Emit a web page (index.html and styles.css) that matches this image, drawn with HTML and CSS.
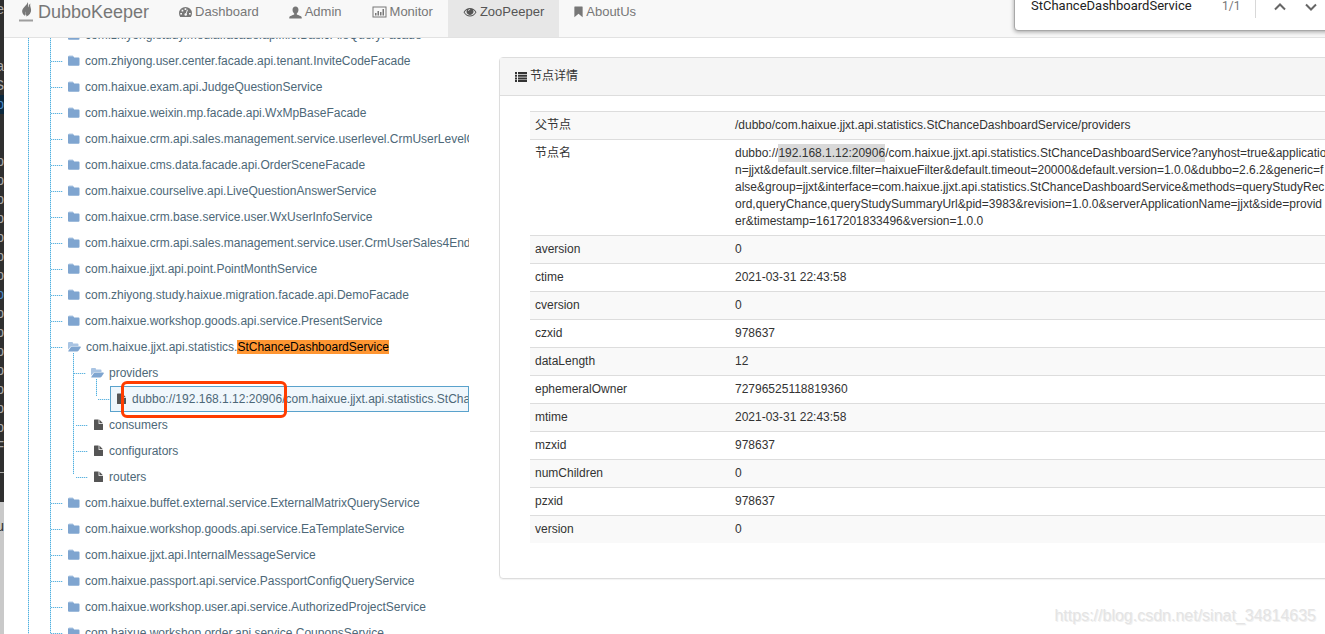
FILE: index.html
```html
<!DOCTYPE html>
<html lang="zh-CN">
<head>
<meta charset="utf-8">
<title>DubboKeeper</title>
<link rel="stylesheet" href="styles.css">
</head>
<body>
<svg class="defs" aria-hidden="true">
  <symbol id="folder" viewBox="0 0 12 12"><path fill="#b4cbe6" d="M0 2.200Q0 .6 1.200.6h3.600L6 2.400H0z"/><path d="M0 1.600h5.300l.9.800H10.600Q11.500 2.400 11.500 3.400v6.300q0 1-1 1H1q-1 0-1-1z"/></symbol>
  <symbol id="folder-open" viewBox="0 0 13 12"><path fill="#a9c4e3" d="M0 8.500V2q0-1 1-1h3q1 0 1 1v.5h4.500q1 0 1 1V5H4.200q-1 0-1.600.7z"/><path d="M4 5.600h8.300q.9 0 .4.800l-2.200 3.300q-.5.800-1.400.8H.8q-.9 0-.4-.8L2.600 6.400q.5-.8 1.400-.8z"/></symbol>
  <symbol id="file" viewBox="0 0 9 12"><path d="M.6.500h4v3.900q0 .6.600.6H9v5.400q0 .6-.6.600H.6q-.6 0-.6-.6V1.100Q0 .5.600.5zM5.400.6 8.900 4.200H5.400z"/></symbol>
</svg>
<div class="screen">
  <aside class="editor" aria-hidden="true">
    <div class="code"><i>e</i><i></i><i></i><i>a</i><i>S</i><i class="sel">p</i><i></i><i></i><i>p</i><i>p</i><i>p</i><i>p</i><i>p</i><i>p</i><i>p</i><i class="blue">p</i><i>p</i><i>p</i><i>p</i><i>p</i><i>p</i><i>p</i><i>p</i><i>F</i><i>_</i><i></i></div>
    <div class="status">u</div>
  </aside>
  <div class="page">
    <header class="navbar">
      <a class="brand" href="#"><svg class="flame" viewBox="0 0 15 20"><path d="M8.500 0C9 3 2.500 5.500 3.200 10c.3 2 1.700 3.300 3 4-.8-2.500.4-4 1.700-6 .5 2.500-.2 4.300-.7 6.400 3-1 5-3.400 4.900-6.400C12 5.800 10.600 4 11.400 1.600 10 2.600 9.500 4 9.600 6 8.500 4.500 9.800 2 8.500 0z"/><path d="M6.200 12.500Q6 9 8 6.500l2.500-2 .8 5L8 13.500z"/><path opacity=".7" d="M0 17.500h14V19.500H0z"/></svg>DubboKeeper</a>
      <nav class="menu">
        <a href="#"><svg class="i-dash" viewBox="0 0 13 12"><path fill-rule="evenodd" d="M1.200 11Q0 9.200 0 7.200a6.500 6.200 0 0 1 13 0q0 2-1.200 3.800zM1.300 6.900v1.700h1.700V6.900zM2.600 3.700v1.700h1.700V3.700zM5.600 2.200v1.700h1.700V2.200zM10 6.900v1.700h1.700V6.900zM8.900 3.900 8 3.500 6.900 7q-1.500.1-1.500 1.500 0 1.300 1.300 1.300T8 8.500q0-.7-.4-1.100z"/></svg>Dashboard</a>
        <a href="#"><svg class="i-user" viewBox="0 0 14 13"><path d="M7 0c2.100 0 3.200 1.500 3.200 3.500 0 1.800-.8 3.200-1.800 4v1.200c1.500.9 4.900 1.300 5.300 3.100V13H.3v-1.200c.4-1.800 3.800-2.200 5.300-3.100V7.500c-1-.8-1.800-2.200-1.800-4C3.800 1.500 4.900 0 7 0z"/></svg>Admin</a>
        <a href="#"><svg class="i-chart" viewBox="0 0 14 12"><path fill-rule="evenodd" d="M0 .5h14v11H0zm1 1v9h12v-9zM2.500 7h1.500v2.500H2.500zM5 5h1.500v4.500H5zM7.500 6H9v3.500H7.500zM10 3h1.500v6.500H10z"/></svg>Monitor</a>
        <a class="active" href="#"><svg class="i-eye" viewBox="0 0 13 10"><path fill-rule="evenodd" d="M0 5.200Q2.600 1 6.500 1T13 5.200Q10.400 9.400 6.500 9.400T0 5.200zm1.100 0Q3.200 8.500 6.500 8.500t5.400-3.300Q10.900 3.500 9.400 2.700a3.400 3.400 0 1 1-5.800 0Q2.100 3.500 1.100 5.200zM6.600 2Q4.700 2 4.700 3.900h.8q0-1.100 1.100-1.100z"/></svg>ZooPeeper</a>
        <a href="#"><svg class="i-mark" viewBox="0 0 10 12"><path d="M.8 0h8.400q.4 0 .4.500V11.700L5 7.900.4 11.700V.5Q.4 0 .8 0z"/></svg>AboutUs</a>
      </nav>
    </header>
    <form class="find" role="search">
      <input type="text" aria-label="Find in page" value="StChanceDashboardService">
      <output>1/1</output>
      <button type="button" aria-label="Previous"><svg viewBox="0 0 12 8"><path d="m1 6.500 5-5 5 5"/></svg></button>
      <button type="button" aria-label="Next"><svg viewBox="0 0 12 8"><path d="m1 1.500 5 5 5-5"/></svg></button>
    </form>
    <main class="content">
      <div class="root-line">
        <ul class="tree">
          <li><a href="#"><svg><use href="#folder"/></svg>com.zhiyong.study.media.facade.api.file.BasicFileQueryFacade</a></li>
          <li><a href="#"><svg><use href="#folder"/></svg>com.zhiyong.user.center.facade.api.tenant.InviteCodeFacade</a></li>
          <li><a href="#"><svg><use href="#folder"/></svg>com.haixue.exam.api.JudgeQuestionService</a></li>
          <li><a href="#"><svg><use href="#folder"/></svg>com.haixue.weixin.mp.facade.api.WxMpBaseFacade</a></li>
          <li><a href="#"><svg><use href="#folder"/></svg>com.haixue.crm.api.sales.management.service.userlevel.CrmUserLevelQueryService</a></li>
          <li><a href="#"><svg><use href="#folder"/></svg>com.haixue.cms.data.facade.api.OrderSceneFacade</a></li>
          <li><a href="#"><svg><use href="#folder"/></svg>com.haixue.courselive.api.LiveQuestionAnswerService</a></li>
          <li><a href="#"><svg><use href="#folder"/></svg>com.haixue.crm.base.service.user.WxUserInfoService</a></li>
          <li><a href="#"><svg><use href="#folder"/></svg>com.haixue.crm.api.sales.management.service.user.CrmUserSales4EndService</a></li>
          <li><a href="#"><svg><use href="#folder"/></svg>com.haixue.jjxt.api.point.PointMonthService</a></li>
          <li><a href="#"><svg><use href="#folder"/></svg>com.zhiyong.study.haixue.migration.facade.api.DemoFacade</a></li>
          <li><a href="#"><svg><use href="#folder"/></svg>com.haixue.workshop.goods.api.service.PresentService</a></li>
          <li><a class="open" href="#"><svg><use href="#folder-open"/></svg><span>com.haixue.jjxt.api.statistics.<mark>StChanceDashboardService</mark></span></a>
            <ul class="branch">
              <li><a class="open" href="#"><svg><use href="#folder-open"/></svg>providers</a>
                <ul class="branch leafs">
                  <li class="selected"><a class="file" href="#"><svg><use href="#file"/></svg>dubbo://192.168.1.12:20906/com.haixue.jjxt.api.statistics.StChanceDashboardService</a></li>
                </ul>
              </li>
              <li><a class="file" href="#"><svg><use href="#file"/></svg>consumers</a></li>
              <li><a class="file" href="#"><svg><use href="#file"/></svg>configurators</a></li>
              <li><a class="file" href="#"><svg><use href="#file"/></svg>routers</a></li>
            </ul>
          </li>
          <li><a href="#"><svg><use href="#folder"/></svg>com.haixue.buffet.external.service.ExternalMatrixQueryService</a></li>
          <li><a href="#"><svg><use href="#folder"/></svg>com.haixue.workshop.goods.api.service.EaTemplateService</a></li>
          <li><a href="#"><svg><use href="#folder"/></svg>com.haixue.jjxt.api.InternalMessageService</a></li>
          <li><a href="#"><svg><use href="#folder"/></svg>com.haixue.passport.api.service.PassportConfigQueryService</a></li>
          <li><a href="#"><svg><use href="#folder"/></svg>com.haixue.workshop.user.api.service.AuthorizedProjectService</a></li>
          <li><a href="#"><svg><use href="#folder"/></svg>com.haixue.workshop.order.api.service.CouponsService</a></li>
        </ul>
      </div>
      <section class="panel">
        <h2><svg viewBox="0 0 12 10"><path d="M0 0h2v2H0zM3 0h9v2H3zM0 2.700h2v2H0zM3 2.700h9v2H3zM0 5.400h2v2H0zM3 5.400h9v2H3zM0 8.100h2v2H0zM3 8.100h9v2H3z"/></svg>节点详情</h2>
        <table>
          <tr><th scope="row">父节点</th><td>/dubbo/com.haixue.jjxt.api.statistics.StChanceDashboardService/providers</td></tr>
          <tr><th scope="row">节点名</th><td>dubbo://<span class="picked">192.168.1.12:20906</span>/com.haixue.jjxt.api.statistics.StChanceDashboardService?anyhost=true&amp;application=jjxt&amp;default.service.filter=haixueFilter&amp;default.timeout=20000&amp;default.version=1.0.0&amp;dubbo=2.6.2&amp;generic=false&amp;group=jjxt&amp;interface=com.haixue.jjxt.api.statistics.StChanceDashboardService&amp;methods=queryStudyRecord,queryChance,queryStudySummaryUrl&amp;pid=3983&amp;revision=1.0.0&amp;serverApplicationName=jjxt&amp;side=provider&amp;timestamp=1617201833496&amp;version=1.0.0</td></tr>
          <tr><th scope="row">aversion</th><td>0</td></tr>
          <tr><th scope="row">ctime</th><td>2021-03-31 22:43:58</td></tr>
          <tr><th scope="row">cversion</th><td>0</td></tr>
          <tr><th scope="row">czxid</th><td>978637</td></tr>
          <tr><th scope="row">dataLength</th><td>12</td></tr>
          <tr><th scope="row">ephemeralOwner</th><td>72796525118819360</td></tr>
          <tr><th scope="row">mtime</th><td>2021-03-31 22:43:58</td></tr>
          <tr><th scope="row">mzxid</th><td>978637</td></tr>
          <tr><th scope="row">numChildren</th><td>0</td></tr>
          <tr><th scope="row">pzxid</th><td>978637</td></tr>
          <tr><th scope="row">version</th><td>0</td></tr>
        </table>
      </section>
    </main>
    <div class="watermark">https://blog.csdn.net/sinat_34814635</div>
  </div>
</div>
</body>
</html>
```
FILE: styles.css
```css
*, *::before, *::after { box-sizing: border-box; }
:root {
  --dots-down: repeating-linear-gradient(180deg, #4fb0e0 0 1px, #c2e3f4 1px 2px);
  --dots-across: repeating-linear-gradient(90deg, #5db4e0 0 1px, #d3eaf6 1px 2px);
}
body {
  margin: 0;
  font: 12px/17px "Liberation Sans", "Noto Sans CJK SC", sans-serif;
  color: #333;
  background: #fff;
}
a { color: inherit; text-decoration: none; }
ul { list-style: none; margin: 0; padding: 0; }
svg { fill: currentColor; flex: none; }
.defs { position: absolute; width: 0; height: 0; }
.screen { display: flex; height: 100vh; overflow: hidden; }

/* editor window behind the browser */
.editor { display: flex; flex-direction: column; width: 4px; flex: none; overflow: hidden; background: #c9c9c9; }
.code { background: #2f2f2f; color: #a9a9a9; padding-bottom: 8px; }
.code i { display: flex; justify-content: flex-end; height: 19px; font: 14px/19px "Liberation Sans", sans-serif; }
.code .sel { background: #0d293e; color: #4a88c7; }
.code .blue { color: #4a88c7; }
.status { display: flex; justify-content: flex-end; padding-top: 16px; font-size: 14px; }

.page { position: relative; flex: 1; min-width: 0; display: flex; flex-direction: column; overflow: hidden; }

.navbar { display: flex; flex: none; background: #f8f8f8; border-bottom: 1px solid #e2e2e2; color: #777; padding-left: 15px; z-index: 1; }
.brand { display: flex; align-items: flex-start; gap: 4px; padding: 2px 0 15px; font-size: 18px; line-height: 20px; }
.flame { width: 15px; height: 20px; }
.menu { display: flex; padding-left: 15px; font-size: 13px; line-height: 20px; }
.menu a { display: flex; align-items: center; gap: 3px; padding: 2px 15px 15px; }
.menu .active { background: #e7e7e7; color: #555; }
.i-dash { width: 13px; height: 12px; }
.i-user { width: 13px; height: 13px; }
.i-chart { width: 15px; height: 12px; }
.i-eye { width: 14px; height: 10px; }
.i-mark { width: 9px; height: 12px; }

/* find-in-page bar floats over the page */
.find {
  position: absolute; top: -11px; left: 1010px; z-index: 2;
  display: flex; align-items: center; width: max-content; height: 42px; padding: 0 24px 0 16px;
  background: #fff; border: 1px solid #a8a8a8; border-radius: 4px;
  box-shadow: 0 1px 4px rgba(0, 0, 0, .35);
}
.find input { width: 176px; padding: 0; border: 0; outline: 0; background: none; font: 13px/20px Roboto, sans-serif; color: #222; }
.find input, .find output, .find button { flex: none; margin-bottom: 8px; }
.find output { width: 48px; padding-left: 15px; color: #777; font: 12px/20px Roboto, sans-serif; }
.find button { width: 16px; height: 24px; padding: 0; border: 0; background: none; color: #666; }
.find output + button { width: 48px; border-left: 1px solid #d8d8d8; }
.find svg { width: 12px; height: 8px; fill: none; stroke: currentColor; stroke-width: 2; }

.content { flex: 1; min-height: 0; display: flex; align-items: flex-start; padding-left: 24px; overflow: hidden; }

/* tree */
.root-line { width: 441px; flex: none; margin-top: -16px; padding-left: 22px; background: var(--dots-down) left / 1px 100% no-repeat; overflow: hidden; color: #4d6878; }
.tree { padding-left: 1px; background: var(--dots-down) left / 1px 100% no-repeat; }
.tree a { display: flex; align-items: center; gap: 5px; height: 26px; white-space: nowrap; }
.tree a::before { content: ""; flex: none; width: 12px; height: 1px; background: var(--dots-across); }
.tree svg { width: 12px; height: 12px; color: #7fa5d0; }
.tree .open svg { width: 13px; }
.tree .file { gap: 6px; padding-left: 2px; }
.tree .file svg { width: 9px; color: #555; }
.tree mark { background: #ff9632; color: #000; }
.branch { position: relative; margin-left: 22px; padding-left: 1px; }
.branch::before { content: ""; position: absolute; left: 0; top: -7px; bottom: 16px; width: 1px; background: var(--dots-down); }
.leafs { margin-left: 22px; padding-left: 2px; }
.selected { position: relative; display: flex; align-items: center; }
.selected::before { content: ""; width: 12px; height: 1px; flex: none; background: var(--dots-across); }
.selected a.file { flex: 1; min-width: 0; overflow: hidden; padding-left: 6px; border: 1px solid #5aa2cc; background: #f0f7fc; }
.selected a::before { display: none; }
.selected::after { content: ""; position: absolute; left: 23px; top: -5px; width: 166px; height: 37px; border: 3px solid #ff3d00; border-radius: 6px; }

/* details */
.panel { flex: 1; min-width: 0; margin: 19px -38px 0 30px; border: 1px solid #ddd; border-radius: 4px; box-shadow: 0 1px 1px rgba(0, 0, 0, .05); }
.panel h2 { display: flex; align-items: center; gap: 3px; margin: 0; padding: 10px 15px; background: #f5f5f5; border-bottom: 1px solid #ddd; font-size: 12px; font-weight: 400; }
.panel h2 svg { width: 12px; height: 10px; }
.panel table { width: calc(100% - 60px); margin: 15px 30px 35px; border-collapse: collapse; table-layout: fixed; }
.panel th, .panel td { padding: 5px; border-top: 1px solid #ddd; text-align: left; vertical-align: top; font-weight: 400; word-break: break-all; }
.panel th { width: 200px; }
.panel tr:nth-child(odd) { background: #f9f9f9; }
.picked { background: #d9d9d9; padding: 2px 0; }

.watermark { position: absolute; right: 9px; bottom: 8px; font-size: 16px; line-height: 20px; color: #e4e4e4; text-shadow: 1px 1px 0 #f0f0f0; }
```
